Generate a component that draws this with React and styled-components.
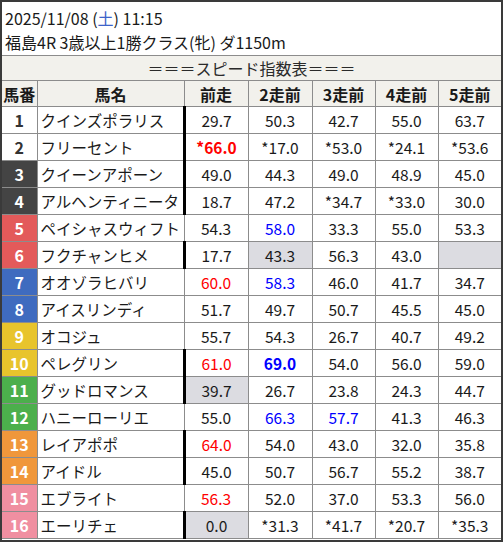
import React from "react"
import styled, { createGlobalStyle } from "styled-components"

const Global = createGlobalStyle`
  html, body { margin: 0; padding: 0; background: #fff; }
  body { font-family: "Noto Sans CJK JP", "Noto Sans", sans-serif; color: #1a1a1a; }
`

const Frame = styled.div`
  width: 503px;
  height: 542px;
  box-sizing: border-box;
  border: 2px solid #3a3a3a;
  background: #fff;
  overflow: hidden;
`

const Info = styled.div`
  padding: 4px 0 0 3px;
  font-size: 16px;
  line-height: 24px;
  height: 49px;
  white-space: nowrap;
`

const Sat = styled.span`
  color: #3d63c9;
`

const Table = styled.table`
  width: 499px;
  border-collapse: collapse;
  table-layout: fixed;
  font-size: 15.5px;
  col.no { width: 35px; }
  col.name { width: 147px; }
  col.val { width: 63px; }
  col.first { width: 64px; }
`

const TitleCell = styled.td`
  height: 24px;
  background: #f2f1ec;
  border-top: 1px solid #8c8c8c;
  border-bottom: 1px solid #8c8c8c;
  text-align: center;
  font-size: 16px;
  color: #2a2a2a;
  padding: 0;
`

const HeadCell = styled.th`
  height: 25px;
  background: #f2f1ec;
  border: 1px solid #8c8c8c;
  border-top: none;
  font-size: 16px;
  font-weight: 700;
  padding: 0;
  text-align: center;
  &:first-child { border-left: none; }
  &:last-child { border-right: none; }
`

const NumCell = styled.td`
  height: 26px;
  padding: 0;
  text-align: center;
  font-weight: 700;
  font-size: 16px;
  background: ${p => p.$bg};
  color: ${p => (p.$bg === "#fff" ? "#333" : "#fff")};
  border: 1px solid #8c8c8c;
  border-left: none;
`

const NameCell = styled.td`
  padding: 0 0 0 3px;
  white-space: nowrap;
  overflow: hidden;
  border: 1px solid #8c8c8c;
`

const ValCell = styled.td`
  padding: 0;
  text-align: center;
  white-space: nowrap;
  border: 1px solid #8c8c8c;
  background: ${p => (p.$gray ? "#dcdce1" : "#fff")};
  color: ${p => (p.$tone === "r" ? "#ff0000" : p.$tone === "b" ? "#0000ff" : "#1a1a1a")};
  font-weight: ${p => (p.$bold ? 700 : 400)};
  &.mark { border-left: 3px solid #000; }
  &:last-child { border-right: none; }
`

const gateColors = {
  1: "#fff", 2: "#fff",
  3: "#444", 4: "#444",
  5: "#e35a5a", 6: "#e35a5a",
  7: "#3f6bbf", 8: "#3f6bbf",
  9: "#e8c42c", 10: "#e8c42c",
  11: "#4caf4c", 12: "#4caf4c",
  13: "#f0973b", 14: "#f0973b",
  15: "#f08fa1", 16: "#f08fa1",
}

// value strings: "r:" red, "b:" blue, "!" bold, "g:" gray bg
const horses = [
  [1, "クインズポラリス", true, ["29.7", "50.3", "42.7", "55.0", "63.7"]],
  [2, "フリーセント", true, ["r!:*66.0", "*17.0", "*53.0", "*24.1", "*53.6"]],
  [3, "クイーンアポーン", true, ["49.0", "44.3", "49.0", "48.9", "45.0"]],
  [4, "アルヘンティニータ", true, ["18.7", "47.2", "*34.7", "*33.0", "30.0"]],
  [5, "ペイシャスウィフト", false, ["54.3", "b:58.0", "33.3", "55.0", "53.3"]],
  [6, "フクチャンヒメ", true, ["17.7", "g:43.3", "56.3", "43.0", "g:"]],
  [7, "オオゾラヒバリ", false, ["r:60.0", "b:58.3", "46.0", "41.7", "34.7"]],
  [8, "アイスリンディ", false, ["51.7", "49.7", "50.7", "45.5", "45.0"]],
  [9, "オコジュ", false, ["55.7", "54.3", "26.7", "40.7", "49.2"]],
  [10, "ペレグリン", true, ["r:61.0", "b!:69.0", "54.0", "56.0", "59.0"]],
  [11, "グッドロマンス", true, ["g:39.7", "26.7", "23.8", "24.3", "44.7"]],
  [12, "ハニーローリエ", false, ["55.0", "b:66.3", "b:57.7", "41.3", "46.3"]],
  [13, "レイアポポ", true, ["r:64.0", "54.0", "43.0", "32.0", "35.8"]],
  [14, "アイドル", true, ["45.0", "50.7", "56.7", "55.2", "38.7"]],
  [15, "エブライト", false, ["r:56.3", "52.0", "37.0", "53.3", "56.0"]],
  [16, "エーリチェ", true, ["g:0.0", "*31.3", "*41.7", "*20.7", "*35.3"]],
]

function parse(v) {
  const i = v.indexOf(":")
  if (i < 0) return { text: v }
  const flag = v.slice(0, i)
  return {
    text: v.slice(i + 1),
    tone: flag.includes("r") ? "r" : flag.includes("b") ? "b" : null,
    bold: flag.includes("!"),
    gray: flag.includes("g"),
  }
}

const heads = ["馬番", "馬名", "前走", "2走前", "3走前", "4走前", "5走前"]

export default function App() {
  return (
    <Frame>
      <Global />
      <Info>
        <div>2025/11/08 (<Sat>土</Sat>) 11:15</div>
        <div>福島4R 3歳以上1勝クラス(牝) ダ1150m</div>
      </Info>
      <Table>
        <colgroup>
          <col className="no" />
          <col className="name" />
          <col className="first" />
          <col className="first" />
          <col className="val" />
          <col className="val" />
          <col className="val" />
        </colgroup>
        <tbody>
          <tr>
            <TitleCell colSpan={7}>＝＝＝スピード指数表＝＝＝</TitleCell>
          </tr>
          <tr>
            {heads.map(h => <HeadCell key={h}>{h}</HeadCell>)}
          </tr>
          {horses.map(([no, name, mark, vals]) => (
            <tr key={no}>
              <NumCell $bg={gateColors[no]}>{no}</NumCell>
              <NameCell>{name}</NameCell>
              {vals.map((v, i) => {
                const c = parse(v)
                return (
                  <ValCell key={i} className={i === 0 && mark ? "mark" : ""} $tone={c.tone} $bold={c.bold} $gray={c.gray}>
                    {c.text}
                  </ValCell>
                )
              })}
            </tr>
          ))}
        </tbody>
      </Table>
    </Frame>
  )
}
